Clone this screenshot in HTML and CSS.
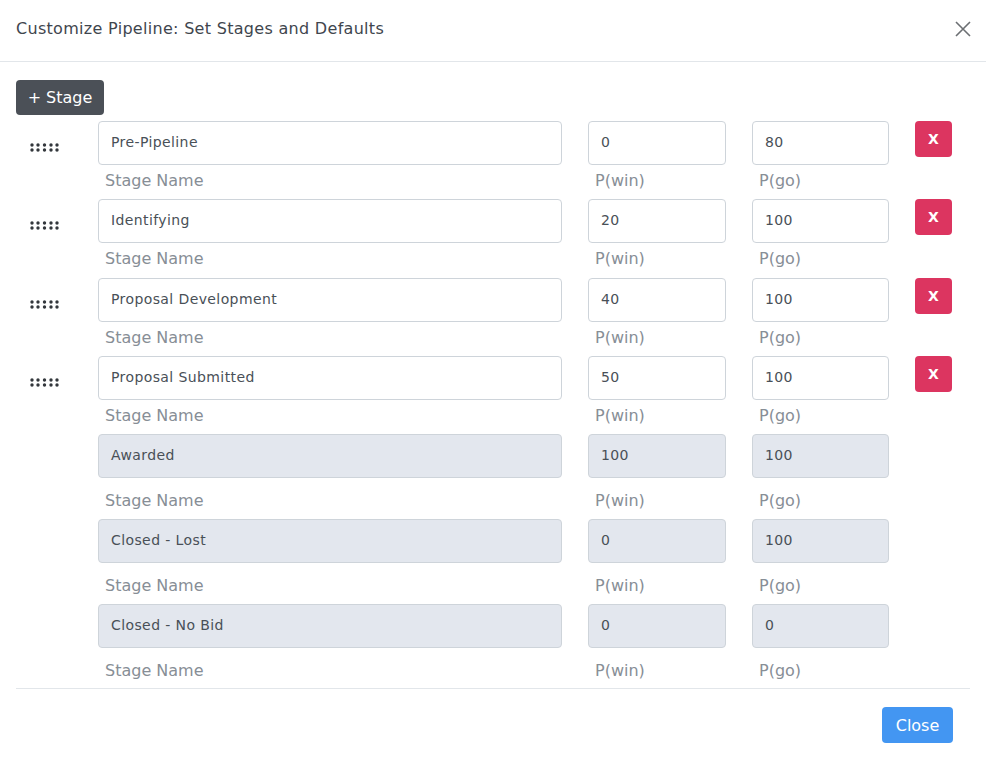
FILE: index.html
```html
<!DOCTYPE html>
<html>
<head>
<meta charset="utf-8">
<link rel="stylesheet" href="styles.css">
</head>
<body>
<div class="modal">
  <div class="modal-header">
    <h5 class="title">Customize Pipeline: Set Stages and Defaults</h5>
    <button class="close-x" aria-label="Close">
      <svg width="16" height="16" viewBox="0 0 16 16"><path d="M1 1L15 15M15 1L1 15" stroke="#6c6f73" stroke-width="1.6" fill="none"/></svg>
    </button>
  </div>
  <div class="modal-body">
    <button class="btn-add">+ Stage</button>
    <div class="stages">
      <div class="row">
        <div class="handle"><svg width="29" height="9" viewBox="0 0 29 9"><g fill="#33373c"><circle cx="2" cy="2" r="1.7"/><circle cx="8" cy="2" r="1.7"/><circle cx="14.5" cy="2" r="1.7"/><circle cx="21" cy="2" r="1.7"/><circle cx="27" cy="2" r="1.7"/><circle cx="2" cy="7" r="1.7"/><circle cx="8" cy="7" r="1.7"/><circle cx="14.5" cy="7" r="1.7"/><circle cx="21" cy="7" r="1.7"/><circle cx="27" cy="7" r="1.7"/></g></svg></div>
        <div class="field"><div class="input">Pre-Pipeline</div><div class="label">Stage Name</div></div>
        <div class="field"><div class="input">0</div><div class="label">P(win)</div></div>
        <div class="field"><div class="input">80</div><div class="label">P(go)</div></div>
        <div><button class="btn-del">X</button></div>
      </div>
      <div class="row">
        <div class="handle"><svg width="29" height="9" viewBox="0 0 29 9"><g fill="#33373c"><circle cx="2" cy="2" r="1.7"/><circle cx="8" cy="2" r="1.7"/><circle cx="14.5" cy="2" r="1.7"/><circle cx="21" cy="2" r="1.7"/><circle cx="27" cy="2" r="1.7"/><circle cx="2" cy="7" r="1.7"/><circle cx="8" cy="7" r="1.7"/><circle cx="14.5" cy="7" r="1.7"/><circle cx="21" cy="7" r="1.7"/><circle cx="27" cy="7" r="1.7"/></g></svg></div>
        <div class="field"><div class="input">Identifying</div><div class="label">Stage Name</div></div>
        <div class="field"><div class="input">20</div><div class="label">P(win)</div></div>
        <div class="field"><div class="input">100</div><div class="label">P(go)</div></div>
        <div><button class="btn-del">X</button></div>
      </div>
      <div class="row">
        <div class="handle"><svg width="29" height="9" viewBox="0 0 29 9"><g fill="#33373c"><circle cx="2" cy="2" r="1.7"/><circle cx="8" cy="2" r="1.7"/><circle cx="14.5" cy="2" r="1.7"/><circle cx="21" cy="2" r="1.7"/><circle cx="27" cy="2" r="1.7"/><circle cx="2" cy="7" r="1.7"/><circle cx="8" cy="7" r="1.7"/><circle cx="14.5" cy="7" r="1.7"/><circle cx="21" cy="7" r="1.7"/><circle cx="27" cy="7" r="1.7"/></g></svg></div>
        <div class="field"><div class="input">Proposal Development</div><div class="label">Stage Name</div></div>
        <div class="field"><div class="input">40</div><div class="label">P(win)</div></div>
        <div class="field"><div class="input">100</div><div class="label">P(go)</div></div>
        <div><button class="btn-del">X</button></div>
      </div>
      <div class="row">
        <div class="handle"><svg width="29" height="9" viewBox="0 0 29 9"><g fill="#33373c"><circle cx="2" cy="2" r="1.7"/><circle cx="8" cy="2" r="1.7"/><circle cx="14.5" cy="2" r="1.7"/><circle cx="21" cy="2" r="1.7"/><circle cx="27" cy="2" r="1.7"/><circle cx="2" cy="7" r="1.7"/><circle cx="8" cy="7" r="1.7"/><circle cx="14.5" cy="7" r="1.7"/><circle cx="21" cy="7" r="1.7"/><circle cx="27" cy="7" r="1.7"/></g></svg></div>
        <div class="field"><div class="input">Proposal Submitted</div><div class="label">Stage Name</div></div>
        <div class="field"><div class="input">50</div><div class="label">P(win)</div></div>
        <div class="field"><div class="input">100</div><div class="label">P(go)</div></div>
        <div><button class="btn-del">X</button></div>
      </div>
      <div class="row fixed">
        <div></div>
        <div class="field"><div class="input disabled">Awarded</div><div class="label">Stage Name</div></div>
        <div class="field"><div class="input disabled">100</div><div class="label">P(win)</div></div>
        <div class="field"><div class="input disabled">100</div><div class="label">P(go)</div></div>
        <div></div>
      </div>
      <div class="row fixed">
        <div></div>
        <div class="field"><div class="input disabled">Closed - Lost</div><div class="label">Stage Name</div></div>
        <div class="field"><div class="input disabled">0</div><div class="label">P(win)</div></div>
        <div class="field"><div class="input disabled">100</div><div class="label">P(go)</div></div>
        <div></div>
      </div>
      <div class="row fixed last">
        <div></div>
        <div class="field"><div class="input disabled">Closed - No Bid</div><div class="label">Stage Name</div></div>
        <div class="field"><div class="input disabled">0</div><div class="label">P(win)</div></div>
        <div class="field"><div class="input disabled">0</div><div class="label">P(go)</div></div>
        <div></div>
      </div>
    </div>
    <div class="modal-footer">
      <button class="btn-close">Close</button>
    </div>
  </div>
</div>
</body>
</html>
```

FILE: styles.css
```css
* { box-sizing: border-box; }
html, body { margin: 0; padding: 0; background: #fff; }
body {
  font-family: "DejaVu Sans", "Open Sans", sans-serif;
  color: #495057;
  width: 986px;
  height: 777px;
  overflow: hidden;
}
button { font-family: inherit; cursor: pointer; }
.modal { width: 986px; }
.modal-header {
  height: 62px;
  border-bottom: 1px solid #e2e6ea;
  display: flex;
  align-items: center;
  justify-content: space-between;
  padding: 0 15px 4px 16px;
}
.title {
  margin: 0;
  font-size: 16px;
  font-weight: 500;
  color: #3f464e;
  letter-spacing: 0.3px;
}
.close-x {
  border: 0;
  background: none;
  padding: 0;
  width: 16px;
  height: 16px;
  display: flex;
}
.modal-body { padding: 18px 16px 0 16px; }
.btn-add {
  display: block;
  height: 35px;
  width: 88px;
  border: 0;
  border-radius: 4px;
  background: #4b5057;
  color: #fff;
  font-size: 16px;
  padding: 0;
}
.stages { margin-top: 6px; }
.row {
  display: grid;
  grid-template-columns: 56px 464px 138px 137px 37px;
  column-gap: 26px;
  height: 78.3px;
}
.row.fixed { height: 85px; }
.row.last { height: 84px; }
.handle { display: flex; align-items: flex-start; padding: 22px 0 0 14px; }
.field { display: flex; flex-direction: column; }
.input {
  height: 44px;
  border: 1px solid #ced4da;
  border-radius: 4px;
  padding: 0 12px 2px;
  display: flex;
  align-items: center;
  font-size: 14px;
  letter-spacing: 0.4px;
  color: #495057;
  background: #fff;
}
.input.disabled { background: #e3e7ee; }
.label {
  margin-top: 4px;
  padding-left: 7px;
  font-size: 16px;
  line-height: 24px;
  color: #878e96;
}
.row.fixed .label { margin-top: 11px; }
.btn-del {
  width: 37px;
  height: 36px;
  border: 0;
  border-radius: 4px;
  background: #dc3560;
  color: #fff;
  font-size: 14px;
  font-weight: 600;
  padding: 0;
}
.modal-footer {
  border-top: 1px solid #e2e6ea;
  display: flex;
  justify-content: flex-end;
  padding: 18px 17px 0 0;
}
.btn-close {
  width: 71px;
  height: 36px;
  border: 0;
  border-radius: 4px;
  background: #4396f2;
  color: #fff;
  font-size: 16px;
  padding: 0;
}
```
